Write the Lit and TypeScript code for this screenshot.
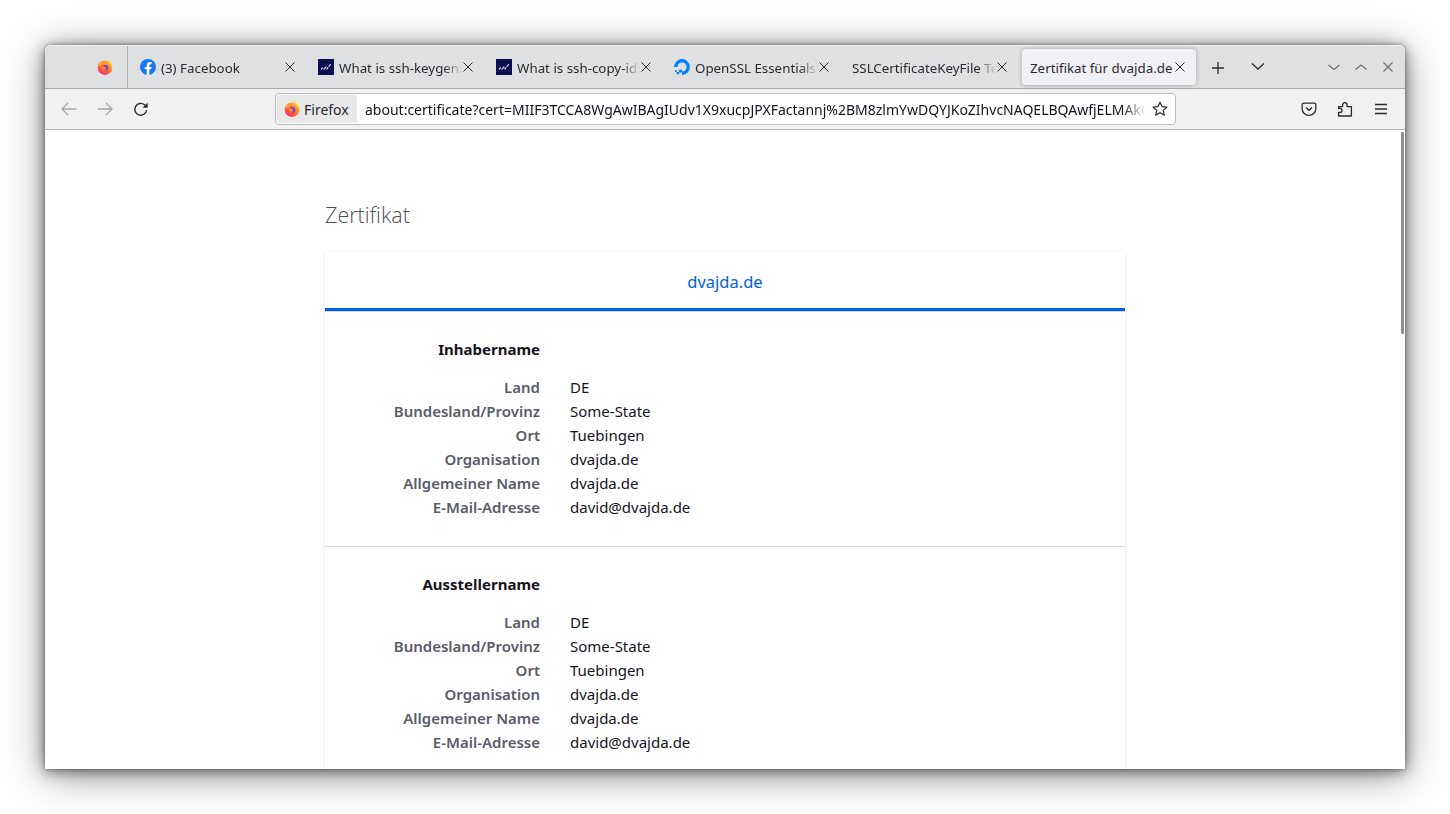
import { LitElement, html, css } from "lit";
import { customElement } from "lit/decorators.js";

const firefox = (s: number) => html`<svg class="ico" width=${s} height=${s} viewBox="0 0 16 16">
  <defs>
    <linearGradient id="ffa" x1="0.85" y1="0.1" x2="0.25" y2="0.95"><stop offset="0" stop-color="#ffb92e"/><stop offset=".5" stop-color="#ff7a2b"/><stop offset="1" stop-color="#f7246a"/></linearGradient>
  </defs>
  <circle cx="8" cy="8.7" r="7.3" fill="url(#ffa)"/>
  <path d="M10.4 .4c2.8 1.5 5 4.2 4.9 8.3-.9-2.4-2.7-3.6-3.8-4.6-.6-1.1-1.1-2.3-1.1-3.7z" fill="#ffd93a"/>
  <path d="M.8 7.6C1.5 4.8 3.6 3.4 6 3.2L5 5.2 2.8 7z" fill="#ffa62e"/>
  <circle cx="8.4" cy="8.7" r="3.4" fill="#ff8a2b"/>
  <path d="M5.4 6.6c1.8-1 4.6-.8 5.6.9.8 1.5.2 3.4-1.4 4-1.4.5-2.9 0-3.6-1 1.3.5 2.6.5 3.1-.4.4-.8 0-1.7-.9-2-.9-.3-1.9-.4-2.8-1.5z" fill="#7a3fe4"/>
  <path d="M3 10.4c.7 2.4 2.8 3.6 5 3.4 2-.2 3.6-1.6 4-3.5-.9 1.4-2.4 2.3-4.2 2.1-2-.2-3.6-.8-4.8-2z" fill="#ff4a4a"/>
</svg>`;

const facebook = html`<svg class="ico" width="16" height="16" viewBox="0 0 16 16">
  <circle cx="8" cy="8" r="8" fill="#1877f2"/>
  <path d="M11.1 10.3l.4-2.3H9.3V6.5c0-.6.3-1.2 1.3-1.2h1V3.3s-.9-.2-1.8-.2c-1.8 0-3 1.1-3 3.1V8h-2v2.3h2V16h2.5v-5.7z" fill="#fff"/>
</svg>`;

const navySq = html`<svg class="ico" width="16" height="16" viewBox="0 0 16 16">
  <rect width="16" height="16" fill="#0d0e4f"/>
  <path d="M3 10.4l1.8-1.8M5.6 10.4l2.8-2.8M8.6 10.4l1.6-2.1M10.6 7.6l2.2-2.2" stroke="#e6e9ff" stroke-width="1.1" fill="none"/>
</svg>`;

const ocean = html`<svg class="ico" width="16" height="16" viewBox="0 0 16 16">
  <path d="M8 15.9V12.6A4.6 4.6 0 1 0 3.4 8H.1A7.9 7.9 0 1 1 8 15.9z" fill="#0080ff"/>
  <rect x="5" y="10.6" width="3" height="2.9" fill="#0080ff"/>
  <rect x="2.7" y="13" width="2.4" height="2.2" fill="#0080ff"/>
  <rect x=".9" y="11.2" width="1.8" height="1.8" fill="#0080ff"/>
</svg>`;

const closeX = html`<svg class="close" width="12" height="12" viewBox="0 0 12 12"><path d="M1.5 1.5l9 9M10.5 1.5l-9 9" stroke="#2b2a33" stroke-width="1" fill="none"/></svg>`;

const tabs = [
  { icon: facebook, title: "(3) Facebook" },
  { icon: navySq, title: "What is ssh-keygen: A Guide" },
  { icon: navySq, title: "What is ssh-copy-id: A Guide" },
  { icon: ocean, title: "OpenSSL Essentials: Working" },
  { icon: null, title: "SSLCertificateKeyFile Text" },
];

const rows = [
  ["Land", "DE"],
  ["Bundesland/Provinz", "Some-State"],
  ["Ort", "Tuebingen"],
  ["Organisation", "dvajda.de"],
  ["Allgemeiner Name", "dvajda.de"],
  ["E-Mail-Adresse", "david@dvajda.de"],
];

@customElement("app-root")
export class AppRoot extends LitElement {
  static styles = css`
    :host {
      display: block;
      width: 1450px;
      height: 814px;
      overflow: hidden;
      background: #fff;
      font-family: "Noto Sans", sans-serif;
      color: #15141a;
    }
    .stage { padding: 45px; height: 814px; box-sizing: border-box; }
    .window {
      height: 724px;
      display: flex;
      flex-direction: column;
      background: #fff;
      overflow: hidden;
      border-radius: 6px 6px 0 0;
    }
    .shadow {
      height: 724px;
      border-radius: 6px 6px 0 0;
      box-shadow: 0 0 3px rgba(0,0,0,.4), 0 2px 14px rgba(0,0,0,.5), 0 6px 40px rgba(0,0,0,.42);
    }
    .strip {
      height: 42px;
      flex: none;
      display: flex;
      background: #dfe0e2;
      border-bottom: 1px solid #a9a9ab;
      border-top: 1px solid #f4f4f5;
    }
    .pinned {
      width: 68px;
      flex: none;
      border-right: 1px solid #b0b0b3;
      display: flex;
      align-items: center;
      justify-content: flex-end;
      padding-right: 14px;
      box-sizing: content-box;
    }
    .ico { flex: none; display: block; }
    .tab {
      width: 174px;
      height: 36px;
      margin: 3px 2px 0 2px;
      flex: none;
      display: flex;
      align-items: center;
      padding: 0 8px;
      box-sizing: border-box;
      font-size: 13.33px;
      color: #2b2a33;
      border-radius: 4px;
      gap: 5px;
      white-space: nowrap;
    }
    .tab.first { margin-left: 4px; }
    .tab.active {
      background: #f0f1f4;
      box-shadow: 0 0 4px rgba(0,0,0,.28);
      gap: 0;
    }
    .title {
      flex: 1;
      overflow: hidden;
      min-width: 0;
      padding-top: 1px;
      line-height: 20px;
      -webkit-mask-image: linear-gradient(to left, transparent 0, #000 18px);
      mask-image: linear-gradient(to left, transparent 0, #000 18px);
    }
    .tab.active .title { -webkit-mask-image: none; mask-image: none; }
    .close { flex: none; margin: 0 2px 0 -5px; }
    .tab.active .close { margin-left: 0; }
    .strip-btn {
      flex: none;
      width: 36px;
      display: flex;
      align-items: center;
      justify-content: center;
      height: 40px;
    }
    .strip-btn.plus { margin: 2px 4px 0 2px; }
    .strip-spacer { flex: 1; }
    .wm { display: flex; align-items: center; gap: 13px; padding-right: 10px; height: 42px; }
    .nav {
      height: 40px;
      flex: none;
      background: #f0f1f3;
      border-bottom: 1px solid #b8b8ba;
      display: flex;
      align-items: center;
      padding: 0 6px;
    }
    .nbtn {
      width: 36px;
      height: 32px;
      display: flex;
      align-items: center;
      justify-content: center;
      flex: none;
    }
    .urlbar {
      margin-left: 116px;
      width: 901px;
      height: 32px;
      flex: none;
      box-sizing: border-box;
      background: #fff;
      border: 1px solid #bdbdc0;
      border-radius: 4px;
      display: flex;
      align-items: center;
      padding: 1px 7px 1px 1px;
      font-size: 14px;
      color: #15141a;
    }
    .identity {
      height: 28px;
      width: 80px;
      box-sizing: border-box;
      flex: none;
      background: #e8e8e9;
      border-radius: 3px;
      display: flex;
      align-items: center;
      gap: 4px;
      padding-left: 7px;
      color: #2b2a33;
      white-space: nowrap;
    }
    .url {
      flex: 1;
      min-width: 0;
      margin-left: 8px;
      overflow: hidden;
      white-space: nowrap;
      -webkit-mask-image: linear-gradient(to left, transparent 0, #000 24px);
      mask-image: linear-gradient(to left, transparent 0, #000 24px);
    }
    .star { flex: none; margin-left: 6px; }
    .nav-right { display: flex; margin-left: 115px; }
    .content {
      flex: 1;
      min-height: 0;
      position: relative;
      overflow: hidden;
      background: #fff;
      padding-top: 68px;
    }
    .thumb {
      position: absolute;
      right: 1px;
      top: 2px;
      width: 3px;
      height: 202px;
      border-radius: 1px;
      background: #8f8f8f;
    }
    .page { width: 800px; margin-left: 280px; }
    h1 {
      margin: 0;
      font-family: "Open Sans", sans-serif;
      font-weight: 300;
      font-size: 21.5px;
      line-height: 34px;
      color: #4f4e58;
      height: 34px;
    }
    .card {
      margin-top: 20px;
      background: #fff;
      box-shadow: 0 1px 4px rgba(12,12,13,.1);
    }
    .head {
      height: 54px;
      padding-top: 2px;
      display: flex;
      align-items: center;
      justify-content: center;
      font-size: 16.5px;
      color: #0060df;
      border-bottom: 3px solid #0060df;
      box-shadow: 0 1px 0 #d7d7db;
      margin-bottom: 1px;
    }
    .section { padding: 25px 0 27px; border-bottom: 1px solid #d7d7db; }
    .grid {
      display: grid;
      grid-template-columns: 215px 1fr;
      column-gap: 30px;
      font-size: 15px;
      line-height: 24px;
    }
    .h { font-weight: 700; text-align: right; color: #15141a; grid-column: 1; margin-bottom: 14px; }
    .k { font-weight: 600; text-align: right; color: #5b5b66; grid-column: 1; }
    .v { grid-column: 2; color: #15141a; }
  `;

  section(name: string) {
    return html`<div class="section"><div class="grid">
      <div class="h">${name}</div>
      ${rows.map(([k, v]) => html`<div class="k">${k}</div><div class="v">${v}</div>`)}
    </div></div>`;
  }

  render() {
    return html`<div class="stage"><div class="shadow"><div class="window">
      <div class="strip">
        <div class="pinned">${firefox(16)}</div>
        ${tabs.map((t, i) => html`<div class="tab ${i === 0 ? "first" : ""}">
          ${t.icon}
          <div class="title">${t.title}</div>
          ${closeX}
        </div>`)}
        <div class="tab active">
          <div class="title">Zertifikat für dvajda.de</div>
          ${closeX}
        </div>
        <div class="strip-btn plus"><svg width="14" height="14" viewBox="0 0 14 14"><path d="M7 1v12M1 7h12" stroke="#2b2a33" stroke-width="1.3" fill="none"/></svg></div>
        <div class="strip-btn"><svg width="14" height="14" viewBox="0 0 14 14"><path d="M1 4.5L7 10l6-5.5" stroke="#2b2a33" stroke-width="1.3" fill="none"/></svg></div>
        <div class="strip-spacer"></div>
        <div class="wm">
          <svg width="14" height="14" viewBox="0 0 14 14"><path d="M1.5 5L7 9.5 12.5 5" stroke="#6e6e73" stroke-width="1.2" fill="none"/></svg>
          <svg width="14" height="14" viewBox="0 0 14 14"><path d="M1.5 9.5L7 5l5.5 4.5" stroke="#6e6e73" stroke-width="1.2" fill="none"/></svg>
          <svg width="14" height="14" viewBox="0 0 14 14"><path d="M2.5 2.5l9 9M11.5 2.5l-9 9" stroke="#6e6e73" stroke-width="1.2" fill="none"/></svg>
        </div>
      </div>
      <div class="nav">
        <div class="nbtn"><svg width="18" height="16" viewBox="0 0 18 16"><path d="M16.5 8H2M8 2L2 8l6 6" stroke="#a5a6aa" stroke-width="1.3" fill="none"/></svg></div>
        <div class="nbtn"><svg width="18" height="16" viewBox="0 0 18 16"><path d="M1.5 8H16M10 2l6 6-6 6" stroke="#a5a6aa" stroke-width="1.3" fill="none"/></svg></div>
        <div class="nbtn"><svg width="16" height="16" viewBox="0 0 16 16"><path d="M13.6 9A5.9 5.9 0 1 1 11.6 3.8L14 5.8" stroke="#2b2a33" stroke-width="1.4" fill="none"/><path d="M14.6 1.8v5h-5z" fill="#2b2a33"/></svg></div>
        <div class="urlbar">
          <div class="identity">${firefox(16)}<span>Firefox</span></div>
          <div class="url">about:certificate?cert=MIIF3TCCA8WgAwIBAgIUdv1X9xucpJPXFactannj%2BM8zlmYwDQYJKoZIhvcNAQELBQAwfjELMAkGA1UEBhMCREUxEzAR</div>
          <svg class="star" width="16" height="16" viewBox="0 0 16 16"><path d="M8 1.2l2 4.5 4.9.5-3.7 3.2 1.1 4.8L8 11.7l-4.3 2.5 1.1-4.8L1.1 6.2 6 5.7z" stroke="#2b2a33" stroke-width="1.2" stroke-linejoin="round" fill="none"/></svg>
        </div>
        <div class="nav-right">
          <div class="nbtn"><svg width="16" height="16" viewBox="0 0 16 16"><path d="M2.6 2.2h10.8c.8 0 1.4.6 1.4 1.4V8a6.8 6.4 0 0 1-13.6 0V3.6c0-.8.6-1.4 1.4-1.4z" stroke="#2b2a33" stroke-width="1.3" fill="none"/><path d="M5 6.4l3 2.8 3-2.8" stroke="#2b2a33" stroke-width="1.4" fill="none"/></svg></div>
          <div class="nbtn"><svg width="16" height="16" viewBox="0 0 16 16"><path d="M1.6 5.6H5.6V3.8a2.2 2.2 0 1 1 4.4 0V5.6h4.4V15H1.6V11.4H3a2 2 0 0 0 0-4H1.6z" stroke="#2b2a33" stroke-width="1.3" fill="none" stroke-linejoin="round"/></svg></div>
          <div class="nbtn"><svg width="14" height="14" viewBox="0 0 14 14"><path d="M1 2.5h12M1 7h12M1 11.5h12" stroke="#2b2a33" stroke-width="1.3" fill="none"/></svg></div>
        </div>
      </div>
      <div class="content">
        <div class="thumb"></div>
        <div class="page">
          <h1>Zertifikat</h1>
          <div class="card">
            <div class="head">dvajda.de</div>
            ${this.section("Inhabername")}
            ${this.section("Ausstellername")}
          </div>
        </div>
      </div>
    </div></div></div>`;
  }
}
